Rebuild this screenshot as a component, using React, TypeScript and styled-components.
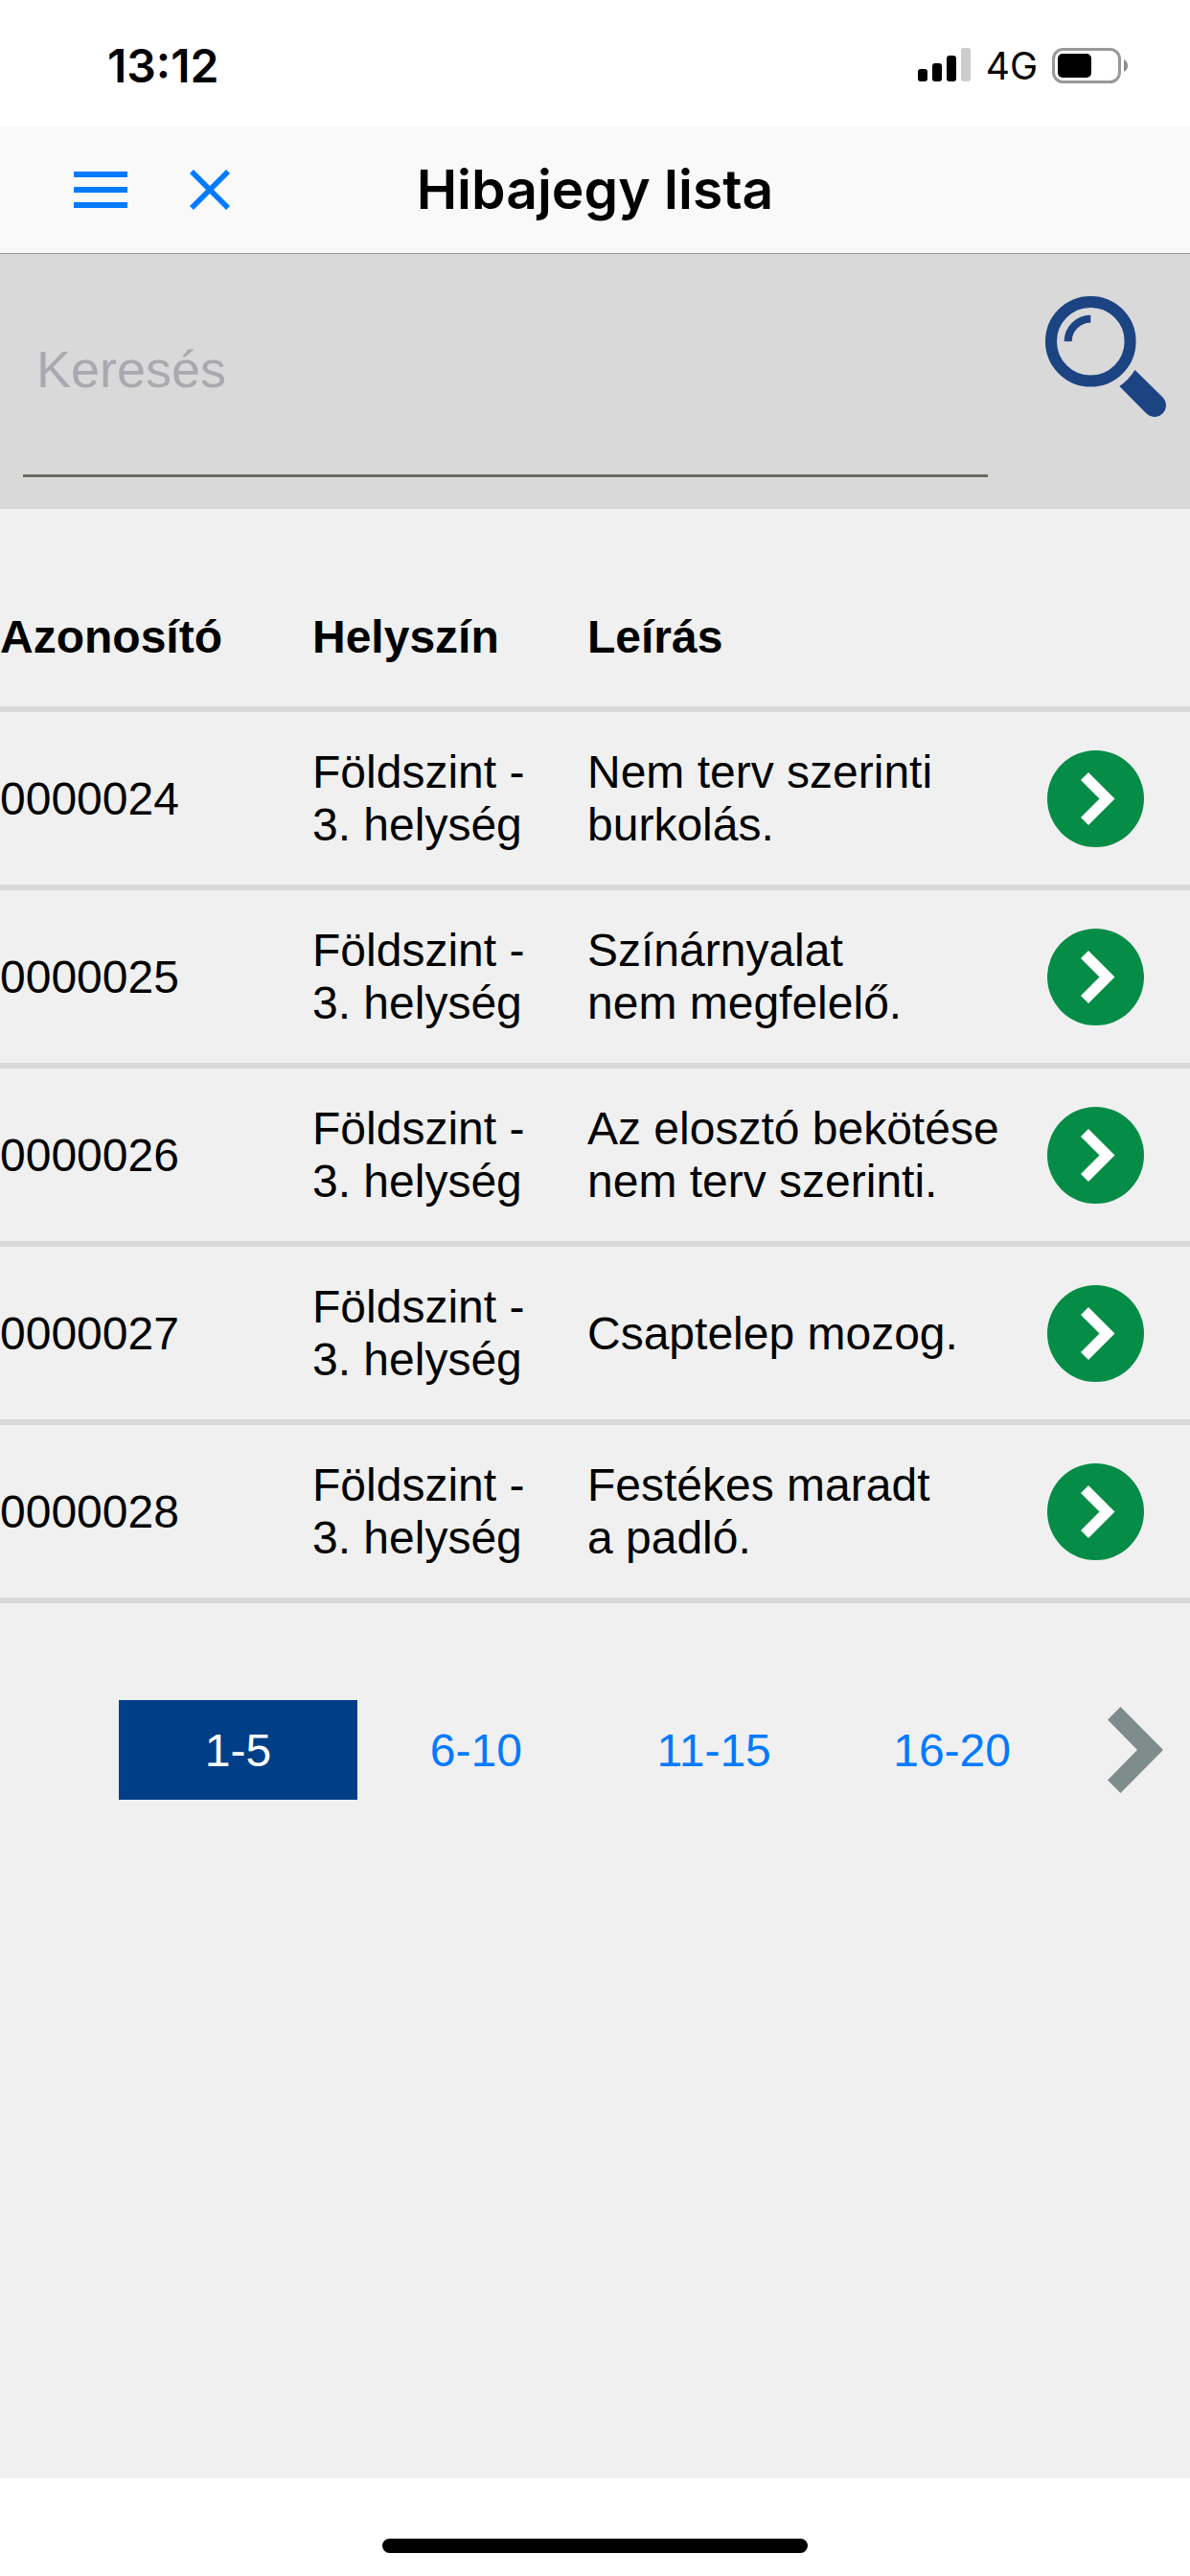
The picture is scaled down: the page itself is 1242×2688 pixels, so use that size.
import React, { useState } from "react";
import styled, { createGlobalStyle } from "styled-components";

const colors = {
  page: "#f0f0f0",
  bar: "#f9f9f9",
  panel: "#d9d9d9",
  link: "#007aff",
  navy: "#003f87",
  icon: "#1c4482",
  green: "#058c46",
  arrow: "#7f8c8c",
};

const GlobalStyle = createGlobalStyle`
  *, *::before, *::after { box-sizing: border-box; }
  body {
    margin: 0;
    background: #fff;
    color: #000;
    font-family: "Liberation Sans", Arial, Helvetica, sans-serif;
    font-size: 48px;
    line-height: 55px;
  }
  button { border: 0; padding: 0; background: none; font: inherit; cursor: pointer; }
  svg { display: block; }
`;

const Screen = styled.div`
  display: flex;
  flex-direction: column;
  min-height: 100vh;
`;

const StatusBar = styled.div`
  display: flex;
  align-items: center;
  justify-content: space-between;
  height: 132px;
  padding: 4px 65px 0 112px;
  font-family: Inter, sans-serif;
`;

const Clock = styled.time`
  font-size: 48px;
  font-weight: 600;
`;

const StatusIcons = styled.div`
  display: flex;
  align-items: center;
  gap: 15px;
`;

const Network = styled.span`
  font-size: 39px;
`;

const NavBar = styled.header`
  display: grid;
  grid-template-columns: 1fr auto 1fr;
  align-items: center;
  height: 133px;
  padding: 0 77px;
  background: ${colors.bar};
  border-bottom: 1px solid #98989a;
`;

const NavActions = styled.div`
  display: flex;
  align-items: center;
  gap: 65px;
  color: ${colors.link};
  button { color: inherit; }
`;

const Title = styled.h1`
  margin: 0;
  font-family: Inter, sans-serif;
  font-size: 57px;
  font-weight: 600;
  line-height: 64px;
`;

const SearchForm = styled.form`
  display: flex;
  align-items: flex-start;
  gap: 60px;
  padding: 10px 25px 33px 24px;
  background: ${colors.panel};
`;

const SearchInput = styled.input`
  flex: 1;
  min-width: 0;
  height: 223px;
  padding: 0 14px;
  border: 0;
  border-bottom: 3px solid #696b61;
  border-radius: 0;
  outline: none;
  background: transparent;
  font: inherit;
  font-size: 54px;
  &::placeholder { color: #a9a9af; opacity: 1; }
`;

const SearchButton = styled.button`
  margin-top: 34px;
  color: ${colors.icon};
`;

const Content = styled.main`
  flex: 1;
  padding-top: 60px;
  background: ${colors.page};
`;

const TicketTable = styled.table`
  width: 100%;
  table-layout: fixed;
  border-collapse: separate;
  border-spacing: 0;
`;

const HeadCell = styled.th<{ $width?: number }>`
  width: ${(p) => (p.$width ? `${p.$width}px` : "auto")};
  height: 152px;
  padding: 0;
  border-bottom: 6px solid ${colors.panel};
  text-align: left;
  font-weight: 700;
`;

const Cell = styled.td`
  height: 186px;
  padding: 0;
  border-bottom: 6px solid ${colors.panel};
  vertical-align: middle;
  white-space: pre-line;
`;

const OpenButton = styled.button`
  display: grid;
  place-items: center;
  width: 101px;
  height: 101px;
  border-radius: 50%;
  background: ${colors.green};
  color: #fff;
`;

const Pagination = styled.nav`
  display: grid;
  grid-template-columns: 1fr repeat(4, 2fr) 1fr;
  padding-top: 101px;
`;

const PageButton = styled.button<{ $active: boolean }>`
  height: 104px;
  background: ${(p) => (p.$active ? colors.navy : "transparent")};
  color: ${(p) => (p.$active ? "#fff" : colors.link)};
  &:first-child { grid-column-start: 2; }
`;

const NextButton = styled.button`
  display: flex;
  align-items: center;
  justify-content: flex-end;
  padding-right: 28px;
  color: ${colors.arrow};
`;

const HomeArea = styled.footer`
  display: flex;
  justify-content: center;
  align-items: flex-end;
  height: 102px;
  padding-bottom: 24px;
  background: #fff;
`;

const HomeIndicator = styled.div`
  width: 444px;
  height: 15px;
  border-radius: 8px;
  background: #000;
`;

const SignalIcon = () => (
  <svg width="56" height="36" viewBox="0 0 56 36" aria-hidden="true">
    <rect x="0" y="22" width="10" height="13" rx="3" />
    <rect x="15" y="16" width="10" height="19" rx="3" />
    <rect x="30" y="8" width="10" height="27" rx="3" />
    <rect x="45" y="0" width="10" height="35" rx="3" fill="#ccc" />
  </svg>
);

const BatteryIcon = () => (
  <svg width="79" height="37" viewBox="0 0 79 37" aria-hidden="true">
    <rect x="1.5" y="1.5" width="69" height="34" rx="10" fill="none" stroke="#999" strokeWidth="3" />
    <rect x="6" y="6" width="35" height="25" rx="5" />
    <path d="M75 12 Q79 14 79 18.500 Q79 23 75 25 Z" fill="#8c8c8c" />
  </svg>
);

const MenuIcon = () => (
  <svg width="56" height="42" viewBox="0 0 56 42" fill="currentColor" aria-hidden="true">
    <path d="M0 2h56v6H0zM0 18h56v6H0zM0 34h56v6H0z" />
  </svg>
);

const CloseIcon = () => (
  <svg width="42" height="42" viewBox="0 0 42 42" stroke="currentColor" strokeWidth="5.600" aria-hidden="true">
    <path d="M2 2 40 40M40 2 2 40" />
  </svg>
);

const SearchIcon = () => (
  <svg width="126" height="126" viewBox="0 0 126 126" fill="none" aria-hidden="true">
    <circle cx="47.300" cy="47.300" r="41.300" stroke="currentColor" strokeWidth="12" />
    <path d="M23.700 47.300A23.600 23.600 0 0 1 47.300 23.700" stroke="currentColor" strokeWidth="8" />
    <path
      d="M93.500 77 122.500 105.500A12 12 0 0 1 105.500 122.500L77.300 94Q87 87.500 93.500 77Z"
      fill="currentColor"
    />
  </svg>
);

const SmallChevron = () => (
  <svg width="41" height="55" viewBox="0 0 41 55" fill="currentColor" aria-hidden="true">
    <path d="M13 0 40.500 27.500 13 55 5 47 24.500 27.500 5 8Z" />
  </svg>
);

const LargeChevron = () => (
  <svg width="58" height="90" viewBox="0 0 58 90" fill="currentColor" aria-hidden="true">
    <path d="M13.500 0 58 45 13.500 90 0 76.500 31 45 0 13.500Z" />
  </svg>
);

const tickets = [
  { id: "0000024", place: "Földszint -\n3. helység", text: "Nem terv szerinti\nburkolás." },
  { id: "0000025", place: "Földszint -\n3. helység", text: "Színárnyalat\nnem megfelelő." },
  { id: "0000026", place: "Földszint -\n3. helység", text: "Az elosztó bekötése\nnem terv szerinti." },
  { id: "0000027", place: "Földszint -\n3. helység", text: "Csaptelep mozog." },
  { id: "0000028", place: "Földszint -\n3. helység", text: "Festékes maradt\na padló." },
];

const pages = ["1-5", "6-10", "11-15", "16-20"];

export default function App() {
  const [page, setPage] = useState(0);

  return (
    <>
      <GlobalStyle />
      <Screen>
        <StatusBar>
          <Clock>13:12</Clock>
          <StatusIcons>
            <SignalIcon />
            <Network>4G</Network>
            <BatteryIcon />
          </StatusIcons>
        </StatusBar>
        <NavBar>
          <NavActions>
            <button type="button" aria-label="Menü"><MenuIcon /></button>
            <button type="button" aria-label="Bezárás"><CloseIcon /></button>
          </NavActions>
          <Title>Hibajegy lista</Title>
        </NavBar>
        <SearchForm onSubmit={(e) => e.preventDefault()}>
          <SearchInput type="text" placeholder="Keresés" aria-label="Keresés" />
          <SearchButton type="submit" aria-label="Keresés indítása"><SearchIcon /></SearchButton>
        </SearchForm>
        <Content>
          <TicketTable>
            <thead>
              <tr>
                <HeadCell scope="col" $width={326}>Azonosító</HeadCell>
                <HeadCell scope="col" $width={287}>Helyszín</HeadCell>
                <HeadCell scope="col">Leírás</HeadCell>
                <HeadCell scope="col" $width={149} aria-label="Megnyitás" />
              </tr>
            </thead>
            <tbody>
              {tickets.map((t) => (
                <tr key={t.id}>
                  <Cell>{t.id}</Cell>
                  <Cell>{t.place}</Cell>
                  <Cell>{t.text}</Cell>
                  <Cell>
                    <OpenButton type="button" aria-label={`${t.id} megnyitása`}><SmallChevron /></OpenButton>
                  </Cell>
                </tr>
              ))}
            </tbody>
          </TicketTable>
          <Pagination aria-label="Lapozás">
            {pages.map((label, i) => (
              <PageButton key={label} type="button" $active={i === page} onClick={() => setPage(i)}>
                {label}
              </PageButton>
            ))}
            <NextButton
              type="button"
              aria-label="Következő"
              onClick={() => setPage(Math.min(page + 1, pages.length - 1))}
            >
              <LargeChevron />
            </NextButton>
          </Pagination>
        </Content>
        <HomeArea><HomeIndicator /></HomeArea>
      </Screen>
    </>
  );
}
